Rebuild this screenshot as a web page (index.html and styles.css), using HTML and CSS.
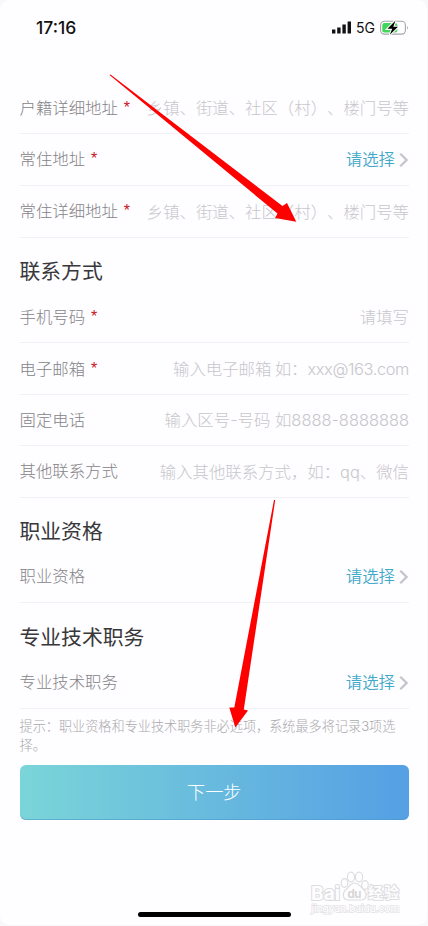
FILE: index.html
```html
<!DOCTYPE html>
<html lang="zh-CN">
<head>
<meta charset="utf-8">
<title>联系方式</title>
<link rel="stylesheet" href="styles.css">
</head>
<body>
<div class="screen">
  <header class="status">
    <span class="time">17:16</span>
    <div class="indicators">
      <svg class="signal" width="20" height="13" viewBox="0 0 20 13"><path d="M0 8.5h3.4v4H0zM5.2 6.5h3.4v6H5.2zM10.4 3.5h3.4v9h-3.4zM15.6 .5H19v12h-3.4z" fill="#111"/></svg>
      <span class="network">5G</span>
      <svg class="battery" width="29" height="16" viewBox="0 0 29 16"><rect x=".6" y="1.3" width="24.8" height="12.8" rx="3.8" fill="none" stroke="#a4a3a5" stroke-width="1.1"/><path d="M27 5.7q1.6 2 0 4z" fill="#98979a"/><rect x="2.3" y="3" width="15" height="9.4" rx="2" fill="#3fd65a"/><path d="M15.5 .5 7.5 8.8h4.7L9.8 14.8 18 6.8h-4.7z" fill="#000" stroke="#fefdff" stroke-width="2.2" paint-order="stroke"/></svg>
    </div>
  </header>

  <main class="form">
    <section>
      <div class="row lower"><span class="label">户籍详细地址</span><b class="required">*</b><span class="placeholder">乡镇、街道、社区（村）、楼门号等</span></div>
      <div class="row"><span class="label">常住地址</span><b class="required">*</b><span class="select">请选择</span><svg class="chevron" width="10" height="16" viewBox="0 0 10 16"><path d="m1.3 1.8 6.3 6.2-6.3 6.2"/></svg></div>
      <div class="row"><span class="label">常住详细地址</span><b class="required">*</b><span class="placeholder low">乡镇、街道、社区（村）、楼门号等</span></div>
    </section>
    <section>
      <h2>联系方式</h2>
      <div class="row lower"><span class="label">手机号码</span><b class="required">*</b><span class="placeholder">请填写</span></div>
      <div class="row lower"><span class="label">电子邮箱</span><b class="required">*</b><span class="placeholder email">输入电子邮箱 如：<span class="address">xxx@163.com</span></span></div>
      <div class="row short"><span class="label">固定电话</span><span class="placeholder">输入区号-号码 如8888-8888888</span></div>
      <div class="row"><span class="label">其他联系方式</span><span class="placeholder low">输入其他联系方式，如：qq、微信</span></div>
    </section>
    <section>
      <h2>职业资格</h2>
      <div class="row"><span class="label">职业资格</span><span class="select">请选择</span><svg class="chevron" width="10" height="16" viewBox="0 0 10 16"><path d="m1.3 1.8 6.3 6.2-6.3 6.2"/></svg></div>
    </section>
    <section>
      <h2 class="tall">专业技术职务</h2>
      <div class="row"><span class="label">专业技术职务</span><span class="select">请选择</span><svg class="chevron" width="10" height="16" viewBox="0 0 10 16"><path d="m1.3 1.8 6.3 6.2-6.3 6.2"/></svg></div>
    </section>
    <p class="hint">提示：职业资格和专业技术职务非必选项，系统最多将记录3项选择。</p>
    <button class="next" type="button">下一步</button>
  </main>

  <svg class="arrows" width="428" height="926" viewBox="0 0 428 926" fill="#f00">
    <path d="M109.500 75 110.500 74.500 282.500 206 287 203 296.300 221.800 275 218 277.500 213.500Z"/>
    <path d="M274 500H275.2L243.8 709.5 248 710.5 235.3 727.5 229.3 707.5 234.3 707.5Z"/>
  </svg>
  <svg class="watermark" width="100" height="50" viewBox="0 0 100 50">
    <g fill="#fefdff" stroke="#dddcde" stroke-width="1.2">
      <path d="M46.5 15c-4 0-5 3-7.500 5.500-6 5-4 11.500 1.500 11.500h12c6 0 8-6.500 2-11.500-3-2.500-4-5.500-8-5.500z"/>
      <ellipse cx="36.500" cy="15" rx="3.300" ry="4.300"/><ellipse cx="43" cy="9" rx="3.600" ry="4.800"/><ellipse cx="51" cy="9" rx="3.600" ry="4.800"/><ellipse cx="57" cy="17" rx="3.300" ry="4.300"/>
    </g>
    <text class="paw" x="39.5" y="29.500" font-size="11.500" textLength="14">du</text>
    <g class="mark">
      <text x="3" y="31.500" font-size="19" textLength="29" lengthAdjust="spacingAndGlyphs">Bai</text>
      <text x="60" y="30" font-size="15" textLength="31">经验</text>
    </g>
    <text class="site" x="3.500" y="43.500" font-size="9.500" textLength="88" lengthAdjust="spacingAndGlyphs">jingyan.baidu.com</text>
  </svg>
  <div class="home"></div>
</div>
</body>
</html>
```
FILE: styles.css
```css
* { box-sizing: border-box; }
body {
  margin: 0;
  background: #f8f7f9;
  font-family: Inter, "Noto Sans CJK SC", sans-serif;
  font-weight: 300;
  text-spacing-trim: space-all;
}
.screen {
  position: relative;
  width: 428px;
  height: 926px;
  overflow: hidden;
  border: solid #f8f7f9;
  border-width: 0 1px 1px 0;
  border-radius: 10px;
  background: #fefdff;
}
.status {
  display: flex;
  justify-content: space-between;
  height: 82px;
  padding: 17px 18px 0 36px;
}
.time {
  color: #111;
  font-size: 17.5px;
  font-weight: 500;
  line-height: 21px;
}
.indicators {
  display: flex;
  align-items: center;
  height: 21px;
}
.signal { margin-right: 4px; }
.network {
  width: 24px;
  color: #111;
  font-size: 14px;
  font-weight: 400;
}
.form { padding: 0 18px 0 19.5px; }
.row {
  display: flex;
  align-items: center;
  height: 52px;
  padding-bottom: 1px;
  border-bottom: 1px solid #f1f0f4;
  font-size: 16.4px;
  line-height: 24px;
  white-space: nowrap;
}
.short { height: 51px; }
.lower { padding: 1px 0 0; }
.label { color: #858487; }
.required {
  margin-left: 6px;
  padding-bottom: 1px;
  color: #c9121f;
  font-family: "Liberation Sans", sans-serif;
  font-size: 16px;
  font-weight: 400;
}
.placeholder {
  margin-left: auto;
  color: #c8c7cb;
}
.low { padding-top: 2px; }
.email { word-spacing: -1.3px; }
.address { letter-spacing: -.38px; }
.select {
  margin-left: auto;
  color: #42a9c9;
  font-weight: 350;
}
.chevron {
  margin: 1px 0 0 4px;
}
.chevron path {
  fill: none;
  stroke: #c5c4c9;
  stroke-width: 2.3;
}
h2 {
  height: 53px;
  margin: 0;
  padding-top: 19px;
  color: #38373a;
  font-size: 20.8px;
  font-weight: 400;
  line-height: 30px;
}
.tall {
  height: 54px;
  padding-top: 20px;
}
.hint {
  height: 56px;
  margin: 0;
  padding-top: 8px;
  color: #aaa9ac;
  font-size: 13.15px;
  line-height: 19px;
}
.next {
  display: block;
  width: 100%;
  height: 55px;
  padding: 0 0 3px;
  border: 0;
  border-radius: 6px;
  background: linear-gradient(90deg, #7ad5d8, #559fe4);
  box-shadow: inset 0 -1px #4b9acb99;
  color: #fff;
  font: 300 18.2px "Noto Sans CJK SC", sans-serif;
}
.arrows, .watermark, .home { position: absolute; }
.arrows { top: 0; left: 0; }
.watermark { left: 308px; top: 868px; }
.mark {
  fill: #fefdff;
  stroke: #dddcde;
  stroke-width: 2px;
  paint-order: stroke;
  font-weight: 700;
}
.paw {
  fill: #d6d5d7;
  font-weight: 700;
}
.site {
  fill: #fefdff;
  stroke: #e2e1e3;
  stroke-width: 1.3px;
  paint-order: stroke;
  font-weight: 500;
}
.home {
  left: 138px;
  top: 912px;
  width: 153px;
  height: 5px;
  border-radius: 3px;
  background: #000;
}
```
